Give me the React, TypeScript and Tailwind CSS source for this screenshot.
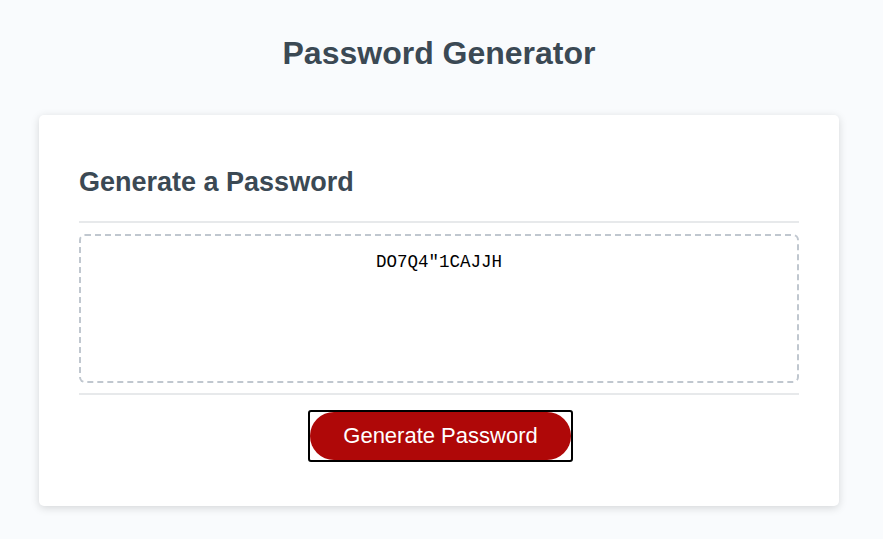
import { useState } from "react";

const chars = "ABCDEFGHIJKLMNOPQRSTUVWXYZ0123456789!\"#$%&*";

const makePassword = (length: number) =>
  Array.from({ length }, () => chars[Math.floor(Math.random() * chars.length)]).join("");

export default function App() {
  const [password, setPassword] = useState('DO7Q4"1CAJJH');

  return (
    <div className="min-h-[539px] bg-[#f9fbfd] pr-[5px] pt-[35px] font-['Liberation_Sans',Arial,sans-serif] text-[#3b4954]">
      <header className="text-center">
        <h1 className="text-[32px] font-bold leading-[37px]">Password Generator</h1>
      </header>

      <div className="mx-auto mt-[43px] w-[800px] rounded-[5px] bg-white px-10 pb-[44px] pt-[30px] shadow-[0_2px_8px_0_rgba(0,0,0,0.15)]">
        <div>
          <h2 className="mb-[23px] mt-[22px] text-[27px] font-bold leading-[31px]">Generate a Password</h2>
          <div className="h-[2px] w-full bg-[#e7e9eb]" />
        </div>

        <div className="pb-[10px] pt-[11px]">
          <textarea
            readOnly
            value={password}
            className="block h-[149px] w-full resize-none overflow-hidden rounded-[6px] border-2 border-dashed border-[#c0c7cf] px-[15px] pt-[15px] text-center font-['Liberation_Mono','DejaVu_Sans_Mono',monospace] text-[17.5px] leading-[22px] text-black outline-none"
          />
        </div>

        <div className="text-center">
          <div className="h-[2px] w-full bg-[#e7e9eb]" />
          <span className="ml-[3px] mt-[15px] inline-block rounded-[3px] border-2 border-black">
            <button
              type="button"
              onClick={() => setPassword(makePassword(12))}
              className="block cursor-pointer rounded-[25px] bg-[#af0808] px-[33px] py-[13px] text-[22px] leading-[22px] text-white"
            >
              Generate Password
            </button>
          </span>
        </div>
      </div>
    </div>
  );
}
